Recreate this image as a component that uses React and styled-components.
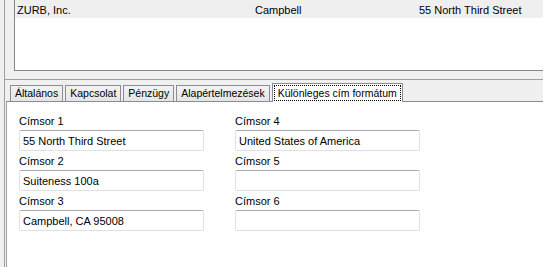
import React from 'react';
import styled, { createGlobalStyle } from 'styled-components';

const Global = createGlobalStyle`
  html, body { margin: 0; padding: 0; background: #f0f0f0; }
  body { font-family: "Liberation Sans", Arial, sans-serif; font-size: 11px; color: #000; }
  * { box-sizing: border-box; }
`;

const Window = styled.div`
  width: 543px;
  height: 267px;
  overflow: hidden;
  background: #f0f0f0;
  padding-left: 4px;
`;

const Frame = styled.div`
  height: 100%;
  border-left: 1px solid #a0a0a0;
  display: flex;
  flex-direction: column;
`;

const TopPane = styled.div`
  flex: none;
  height: 80px;
  padding-left: 9px;
  border-bottom: 1px solid #a0a0a0;
  overflow: hidden;
`;

const List = styled.div`
  width: 600px;
  height: 71px;
  background: #fff;
  border-left: 1px solid #828790;
  border-bottom: 1px solid #828790;
`;

const Row = styled.div`
  display: grid;
  grid-template-columns: 238px 164px 1fr;
  height: 18px;
  padding: 3px 0 0 2px;
  line-height: 14px;
  background: #efefef;
  white-space: nowrap;
`;

const Lower = styled.div`
  flex: 1;
  min-height: 0;
  display: flex;
  flex-direction: column;
  padding-left: 1px;
`;

const TabStrip = styled.div`
  flex: none;
  height: 21px;
  display: flex;
  align-items: flex-end;
  padding-left: 4px;
  position: relative;
  z-index: 1;
  font-size: 10.5px;
`;

const Tab = styled.div`
  height: ${(p) => (p.$active ? '19px' : '16px')};
  margin-bottom: ${(p) => (p.$active ? '-1px' : '0')};
  margin-right: 2px;
  border: 1px solid #898c95;
  border-bottom: none;
  background: ${(p) => (p.$active ? '#fff' : 'linear-gradient(#f3f3f3, #e5e5e5)')};
  padding: ${(p) => (p.$active ? '1px 1px 0' : '0 4px')};
  line-height: 14px;
  white-space: nowrap;
`;

const Focus = styled.span`
  display: block;
  border: 1px dotted #000;
  padding: 0 3px;
  line-height: 14px;
`;

const Panel = styled.div`
  flex: 1;
  background: #fff;
  border-left: 1px solid #a0a0a0;
  border-top: 1px solid #898c95;
  padding: 12px 0 0 12px;
  display: grid;
  grid-template-columns: 185px 185px;
  grid-template-rows: repeat(3, auto);
  grid-auto-flow: column;
  column-gap: 31px;
  row-gap: 3px;
  align-content: start;
`;

const Field = styled.div`
  display: flex;
  flex-direction: column;
  gap: 1px;
`;

const Label = styled.label`
  line-height: 15px;
  height: 15px;
  white-space: nowrap;
`;

const Input = styled.input`
  width: 185px;
  height: 21px;
  margin: 0;
  padding: 0 3px;
  font-family: "Liberation Sans", Arial, sans-serif;
  font-size: 11px;
  color: #000;
  background: #fff;
  border: 1px solid #dde1e6;
  border-top-color: #a9abb2;
  border-radius: 2px;
  outline: none;
`;

const tabs = ['Általános', 'Kapcsolat', 'Pénzügy', 'Alapértelmezések'];
const fields = [
  ['Címsor 1', '55 North Third Street'],
  ['Címsor 2', 'Suiteness 100a'],
  ['Címsor 3', 'Campbell, CA 95008'],
  ['Címsor 4', 'United States of America'],
  ['Címsor 5', ''],
  ['Címsor 6', ''],
];

export default function App() {
  return (
    <Window>
      <Global />
      <Frame>
        <TopPane>
          <List>
            <Row>
              <span>ZURB, Inc.</span>
              <span>Campbell</span>
              <span>55 North Third Street</span>
            </Row>
          </List>
        </TopPane>
        <Lower>
          <TabStrip>
            {tabs.map((t) => (
              <Tab key={t}>{t}</Tab>
            ))}
            <Tab $active>
              <Focus>Különleges cím formátum</Focus>
            </Tab>
          </TabStrip>
          <Panel>
            {fields.map(([l, v]) => (
              <Field key={l}>
                <Label>{l}</Label>
                <Input readOnly value={v} />
              </Field>
            ))}
          </Panel>
        </Lower>
      </Frame>
    </Window>
  );
}
